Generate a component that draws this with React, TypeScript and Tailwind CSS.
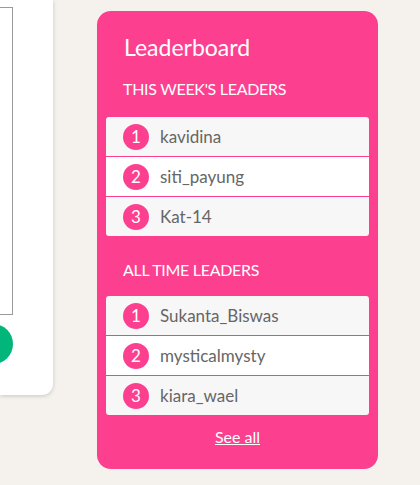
import React from "react";

const weekly = ["kavidina", "siti_payung", "Kat-14"];
const allTime = ["Sukanta_Biswas", "mysticalmysty", "kiara_wael"];

function LeaderList({ names }: { names: string[] }) {
  return (
    <ul className="flex flex-col gap-px rounded-[3px] overflow-hidden">
      {names.map((name, i) => (
        <li
          key={name}
          className={`flex items-center h-[39px] pl-[17px] ${i === 1 ? "bg-white" : "bg-[#f7f7f7]"}`}
        >
          <span className="w-[26px] h-[26px] rounded-full bg-[#fd3f8f] text-white text-[17px] flex items-center justify-center leading-none">
            {i + 1}
          </span>
          <span className="ml-[11px] text-[17px] text-[#666666]">{name}</span>
        </li>
      ))}
    </ul>
  );
}

export default function App() {
  return (
    <div
      className="w-[420px] h-[485px] bg-[#f5f2ed] flex items-start overflow-hidden"
      style={{ fontFamily: "Lato, 'Noto Sans', sans-serif" }}
    >
      {/* Left card, mostly off screen */}
      <div className="w-[53px] h-[395px] shrink-0 bg-white rounded-br-[11px] shadow-[0_1px_4px_rgba(0,0,0,0.18)] flex flex-col overflow-hidden">
        <div className="mt-[7px] w-[13px] h-[308px] border border-l-0 border-[#9a9a9a]" />
        <div className="mt-[9px] -ml-[27px] w-[40px] h-[40px] rounded-full bg-[#00b67a]" />
      </div>

      {/* Leaderboard */}
      <div className="ml-[44px] mt-[11px] w-[281px] h-[458px] shrink-0 bg-[#fd3f8f] rounded-[14px] px-[9px] pt-[22px] flex flex-col">
        <h2 className="pl-[18px] text-white text-[23px] leading-[28px]">Leaderboard</h2>
        <h3 className="pl-[17px] mt-[18px] text-white text-[16px] leading-[20px] uppercase tracking-[-0.3px]">
          This week's leaders
        </h3>
        <div className="mt-[18px]">
          <LeaderList names={weekly} />
        </div>
        <h3 className="pl-[17px] mt-[24px] text-white text-[16px] leading-[20px] uppercase tracking-[-0.3px]">
          All time leaders
        </h3>
        <div className="mt-[16px]">
          <LeaderList names={allTime} />
        </div>
        <a href="#" className="mt-[10px] self-center text-white text-[16px] underline">
          See all
        </a>
      </div>
    </div>
  );
}
